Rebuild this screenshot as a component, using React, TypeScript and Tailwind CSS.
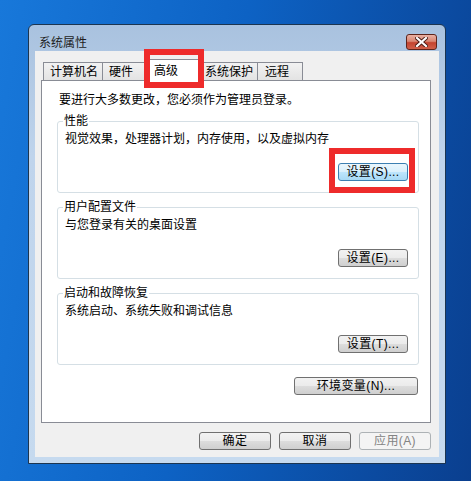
import React from "react";

const btn =
  "h-[18px] flex items-center justify-center rounded-[3px] border text-[12px] leading-[12px]";
const normalBtn =
  "border-[#707070] bg-[linear-gradient(#f2f2f2_0%,#ebebeb_50%,#dddddd_50%,#cfcfcf_100%)] text-black";

const Button = ({
  label,
  className = "",
  focused = false,
  disabled = false,
}: {
  label: string;
  className?: string;
  focused?: boolean;
  disabled?: boolean;
}) => {
  let look = normalBtn;
  if (focused)
    look =
      "border-[#3c7fb1] bg-[linear-gradient(#eaf6fd_0%,#d9f0fc_50%,#bee6fd_50%,#a7d9f5_100%)] text-black";
  if (disabled) look = "border-[#adb2b5] bg-[#f4f4f4] text-[#838383]";
  return (
    <div className={`${btn} ${look} ${className} tracking-[0.4px]`}>{label}</div>
  );
};

const Group = ({
  title,
  text,
  action,
  focused = false,
}: {
  title: string;
  text: string;
  action: string;
  focused?: boolean;
}) => (
  <div className="relative h-[72px] w-[362px] rounded-[3px] border border-[#d5dfe5] pt-[11px] pl-[7px] pr-[10px]">
    {/* label sits over the top border, like a legend */}
    <span className="absolute left-[5px] top-[-7px] bg-white px-[1px] leading-[12px]">
      {title}
    </span>
    <div className="leading-[12px]">{text}</div>
    <div className="mt-[18px] flex justify-end">
      <Button label={action} focused={focused} className="w-[70px]" />
    </div>
  </div>
);

const tabs = ["计算机名", "硬件", "高级", "系统保护", "远程"];
const tabWidths = ["w-[60px]", "w-[44px]", "w-[56px]", "w-[58px]", "w-[46px]"];
const tabPads = ["pl-[6px]", "pl-[6px]", "pl-[8px]", "pl-[4px]", "pl-[7px]"];

const CloseButton = () => (
  <div className="h-[16px] w-[31px] rounded-[3px] border border-[#5e241b] bg-[linear-gradient(#e9b0a3_0%,#d98672_45%,#c4432f_55%,#d0604a_100%)] flex items-center justify-center">
    <svg width="13" height="10" viewBox="0 0 13 10">
      <path
        d="M2 1 L11 9 M11 1 L2 9"
        stroke="#4a1a14"
        strokeWidth="4"
        strokeLinecap="square"
      />
      <path
        d="M2 1 L11 9 M11 1 L2 9"
        stroke="#ffffff"
        strokeWidth="2.2"
        strokeLinecap="square"
      />
    </svg>
  </div>
);

const App = () => {
  return (
    <div className="relative h-[481px] w-[471px] overflow-hidden bg-[linear-gradient(100deg,#1878da_0%,#0d62c4_45%,#0a3f8f_100%)] pt-[24px] pl-[28px] font-['Liberation_Sans','Noto_Sans_CJK_SC',sans-serif] text-[12px] text-black">
      {/* window */}
      <div className="flex h-[440px] w-[418px] flex-col rounded-t-[6px] border border-[#1c3550] bg-[linear-gradient(#a9c2df_0%,#bfd4ec_30%,#c6daef_100%)]">
        {/* title bar */}
        <div className="flex h-[26px] justify-between pl-[10px] pr-[8px]">
          <span className="mt-[12px] leading-[12px] text-[#1e1e1e]">
            系统属性
          </span>
          <div className="mt-[9px]">
            <CloseButton />
          </div>
        </div>

        {/* client area */}
        <div className="mx-[6px] h-[406px] bg-[#f0f0f0] pt-[11px] pl-[6px]">
          {/* tab strip */}
          <div className="flex h-[18px] pl-[2px]">
            {tabs.map((t, i) =>
              i === 2 ? (
                <div
                  key={t}
                  className={`relative z-10 -mt-[3px] -ml-px h-[22px] ${tabWidths[i]} border border-b-0 border-[#898c95] bg-white ${tabPads[i]} pt-[5px] leading-[12px]`}
                >
                  {t}
                </div>
              ) : (
                <div
                  key={t}
                  className={`${i === 0 ? "" : "-ml-px"} h-[18px] ${tabWidths[i]} border border-b-0 border-[#898c95] bg-[linear-gradient(#f2f2f2,#e3e3e3)] ${tabPads[i]} pt-[3px] leading-[12px]`}
                >
                  {t}
                </div>
              ),
            )}
          </div>

          {/* tab panel */}
          <div className="h-[343px] w-[390px] border border-[#898c95] bg-white pt-[13px] pl-[15px]">
            <div className="pl-[2px] leading-[12px]">
              要进行大多数更改，您必须作为管理员登录。
            </div>
            <div className="mt-[15px] flex flex-col gap-[14px]">
              <Group
                title="性能"
                text="视觉效果，处理器计划，内存使用，以及虚拟内存"
                action="设置(S)..."
                focused
              />
              <Group
                title="用户配置文件"
                text="与您登录有关的桌面设置"
                action="设置(E)..."
              />
              <Group
                title="启动和故障恢复"
                text="系统启动、系统失败和调试信息"
                action="设置(T)..."
              />
            </div>
            <div className="mt-[12px] flex w-[361px] justify-end">
              <Button label="环境变量(N)..." className="w-[124px]" />
            </div>
          </div>

          {/* dialog buttons */}
          <div className="mt-[9px] flex w-[390px] justify-end gap-[8px]">
            <Button label="确定" className="w-[72px]" />
            <Button label="取消" className="w-[72px]" />
            <Button label="应用(A)" className="w-[72px]" disabled />
          </div>
        </div>
      </div>

      {/* red highlight boxes drawn over the screenshot */}
      <div className="absolute left-[144px] top-[49px] z-20 h-[39px] w-[60px] border-[6px] border-[#ee2b2b]" />
      <div className="absolute left-[329px] top-[148px] z-20 h-[45px] w-[86px] border-[6px] border-[#ee2b2b]" />
    </div>
  );
};

export default App;
